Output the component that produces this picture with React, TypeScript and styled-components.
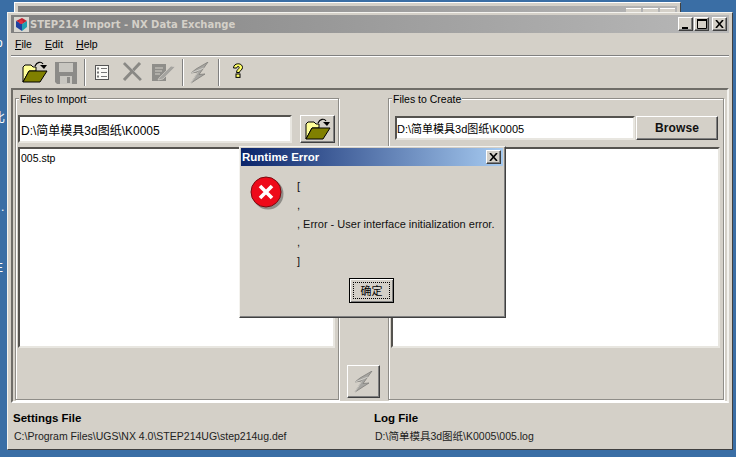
import React from "react";
import styled, { createGlobalStyle } from "styled-components";

const SANS = `"Liberation Sans", "Noto Sans CJK SC", sans-serif`;

const Global = createGlobalStyle`
  html, body { margin: 0; padding: 0; background: #3a6ea5; }
  * { box-sizing: border-box; }
`;

const Desktop = styled.div`
  position: relative;
  width: 736px;
  height: 457px;
  overflow: hidden;
  background: #3a6ea5;
  font: 11px ${SANS};
  color: #000;
`;

const DesktopMark = styled.span<{ $top: number; $left: number }>`
  position: absolute;
  top: ${(p) => p.$top}px;
  left: ${(p) => p.$left}px;
  color: #fff;
  font: 12px ${SANS};
`;

const BackWindow = styled.div`
  position: absolute;
  left: 14px;
  top: 2px;
  width: 667px;
  height: 12px;
  background: #d4d0c8;
  border-top: 1px solid #fff;
  border-left: 1px solid #fff;
  border-right: 1px solid #404040;
  padding: 3px 3px 0;
`;

const BackTitle = styled.div`
  height: 8px;
  background: linear-gradient(90deg, #808080, #b5b5b5);
  display: flex;
  justify-content: flex-end;
  gap: 2px;
  padding-right: 2px;
  padding-top: 2px;
`;

const BackButton = styled.span`
  width: 15px;
  height: 6px;
  background: #d4d0c8;
  border-top: 1px solid #fff;
`;

const MainWindow = styled.div`
  position: absolute;
  left: 7px;
  top: 12px;
  width: 726px;
  height: 438px;
  background: #d4d0c8;
  border: 1px solid;
  border-color: #f4f3ef #404040 #404040 #f4f3ef;
  padding: 2px 3px;
  display: flex;
  flex-direction: column;
`;

const TitleBar = styled.div<{ $active?: boolean }>`
  height: 18px;
  flex: none;
  display: flex;
  align-items: center;
  padding: ${(p) => (p.$active ? "0 2px 1px 1px" : "0 2px 0 3px")};
  background: ${(p) =>
    p.$active
      ? "linear-gradient(90deg, #0a246a, #a6caf0)"
      : "linear-gradient(90deg, #808080, #b8b8b8)"};
`;

const AppTitle = styled.span`
  margin-left: 1px;
  font: bold 10px "DejaVu Sans", sans-serif;
  color: #d4d0c8;
  flex: 1;
`;

const DialogTitle = styled.span`
  font: bold 11.5px ${SANS};
  color: #fff;
  flex: 1;
`;

const CaptionButtons = styled.div`
  display: flex;
`;

const CaptionButton = styled.span<{ $gap?: number }>`
  width: 15px;
  height: 14px;
  margin-left: ${(p) => p.$gap ?? 0}px;
  background: #d4d0c8;
  border: 1px solid;
  border-color: #fff #404040 #404040 #fff;
  box-shadow: inset -1px -1px 0 #808080;
  display: flex;
  align-items: center;
  justify-content: center;
`;

const MenuBar = styled.div`
  height: 22px;
  flex: none;
  display: flex;
  align-items: center;
  gap: 13px;
  padding: 0 0 0 4px;
  font-size: 10.5px;
`;

const MenuItem = styled.span`
  &::first-letter {
    text-decoration: underline;
  }
`;

const Rule = styled.div`
  height: 2px;
  flex: none;
  border-top: 1px solid #808080;
  border-bottom: 1px solid #fff;
`;

const Toolbar = styled.div`
  height: 31px;
  flex: none;
  display: flex;
  align-items: center;
  padding-left: 8px;
`;

const ToolSlot = styled.span<{ $lift?: number }>`
  width: 31px;
  height: 28px;
  padding-bottom: ${(p) => p.$lift ?? 0}px;
  display: flex;
  align-items: center;
  justify-content: center;
`;

const ToolSep = styled.span<{ $after?: number }>`
  width: 2px;
  height: 27px;
  margin: 0 ${(p) => p.$after ?? 0}px 0 3px;
  border-left: 1px solid #808080;
  border-right: 1px solid #fff;
`;

const Body = styled.div`
  height: 315px;
  flex: none;
  display: flex;
  padding: 8px 4px 1px 2px;
  border: 2px solid;
  border-color: #6f6d68 #f4f3ef #fff #6f6d68;
`;

const Group = styled.div<{ $width: number; $pad: number }>`
  position: relative;
  width: ${(p) => p.$width}px;
  height: 302px;
  flex: none;
  padding: 16px ${(p) => p.$pad}px 0;
  border: 1px solid #8f8d88;
  box-shadow: 1px 1px 0 #fff, inset 1px 1px 0 #fff;
`;

const GroupLegend = styled.span`
  position: absolute;
  top: -6px;
  left: 3px;
  padding: 0 1px;
  background: #d4d0c8;
  font-size: 10.5px;
  line-height: 12px;
`;

const InputRow = styled.div<{ $offset?: number; $gap: number }>`
  height: 28px;
  display: flex;
  align-items: flex-start;
  gap: ${(p) => p.$gap}px;
  padding: ${(p) => p.$offset ?? 0}px 0 0 ${(p) => (p.$offset ? p.$offset * 4 : 0)}px;
`;

const PathField = styled.div<{ $width: number; $height: number; $size: number }>`
  width: ${(p) => p.$width}px;
  height: ${(p) => p.$height}px;
  flex: none;
  background: #fff;
  border: 2px solid;
  border-color: #55534f #e8e6e0 #e8e6e0 #55534f;
  padding-left: ${(p) => (p.$size > 11 ? 1 : 0)}px;
  display: flex;
  align-items: center;
  font-size: ${(p) => p.$size}px;
  white-space: nowrap;
`;

const RaisedButton = styled.button<{ $width: number; $height: number }>`
  width: ${(p) => p.$width}px;
  height: ${(p) => p.$height}px;
  flex: none;
  padding: 0;
  background: #d4d0c8;
  border: 1px solid;
  border-color: #fff #404040 #404040 #fff;
  box-shadow: inset -1px -1px 0 #808080;
  display: flex;
  align-items: center;
  justify-content: center;
  font: bold 12px ${SANS};
  letter-spacing: 0.1px;
  color: #111;
`;

const FileList = styled.div<{ $width: number }>`
  width: ${(p) => p.$width}px;
  height: 201px;
  margin-top: 4px;
  background: #fff;
  border: 2px solid;
  border-color: #55534f #e8e6e0 #e8e6e0 #55534f;
  padding: 3px 1px;
  font-size: 10.5px;
  line-height: 13px;
`;

const MiddleColumn = styled.div`
  width: 49px;
  flex: none;
  display: flex;
  align-items: flex-end;
  justify-content: center;
  padding-bottom: 2px;
  height: 302px;
`;

const Footer = styled.div`
  flex: 1;
  display: grid;
  grid-template-columns: 361px 1fr;
  padding: 8px 0 0 2px;
`;

const FooterBlock = styled.div`
  display: flex;
  flex-direction: column;
  gap: 5px;
`;

const FooterLabel = styled.div`
  font: bold 11.5px ${SANS};
  line-height: 14px;
`;

const FooterPath = styled.div`
  font-size: 10.5px;
  line-height: 13px;
  padding-left: 1px;
  white-space: nowrap;
  color: #222;
`;

const Dialog = styled.div`
  position: absolute;
  left: 239px;
  top: 146px;
  width: 267px;
  height: 172px;
  background: #d4d0c8;
  border: 1px solid;
  border-color: #f4f3ef #404040 #404040 #f4f3ef;
  box-shadow: inset -1px -1px 0 #808080;
  padding: 1px 2px 2px 1px;
  display: flex;
  flex-direction: column;
`;

const DialogBody = styled.div`
  display: flex;
  padding: 10px 0 0 9px;
`;

const IconColumn = styled.div`
  width: 47px;
  flex: none;
`;

const MessageColumn = styled.div`
  flex: 1;
  padding-top: 1px;
`;

const MessageLine = styled.div`
  height: 18.8px;
  font-size: 11px;
  line-height: 18.8px;
  white-space: nowrap;
  color: #111;
`;

const OkRow = styled.div`
  margin-top: 7px;
  display: flex;
  justify-content: center;
  padding-right: 1px;
`;

const OkButton = styled.button`
  width: 45px;
  height: 25px;
  padding: 0;
  background: #d4d0c8;
  border: 1px solid #000;
  box-shadow: inset 1px 1px 0 #fff, inset -1px -1px 0 #808080;
  display: flex;
  align-items: center;
  justify-content: center;
  font: 11px ${SANS};
`;

const Focus = styled.span`
  width: 37px;
  height: 17px;
  border: 1px dotted #000;
  display: flex;
  align-items: center;
  justify-content: center;
`;

const Folder = () => (
  <svg width="26" height="24" viewBox="0 0 26 24">
    <path d="M1 22 V7 l2-2 h6 l2 2 h3 v4 H7 Z" fill="#ffff99" stroke="#000" strokeWidth="1" />
    <path d="M1 22 L7 11 H25 L18 22 Z" fill="#808000" stroke="#000" strokeWidth="1" />
    <path d="M13 6 C15 2 19 1 21 4" fill="none" stroke="#000" strokeWidth="1.2" />
    <path d="M18 5 H25 L22 9 Z" fill="#000" />
  </svg>
);

const Floppy = () => (
  <svg width="22" height="22" viewBox="0 0 22 22">
    <path d="M0 0 H22 V22 H2 L0 20 Z" fill="#8c8b88" />
    <rect x="4" y="1" width="14" height="9" fill="#c8c6c0" />
    <rect x="5" y="14" width="12" height="8" fill="#c8c6c0" />
    <rect x="12" y="15" width="3" height="6" fill="#8c8b88" />
  </svg>
);

const ListIcon = () => (
  <svg width="14" height="15" viewBox="0 0 14 15">
    <rect x="0.5" y="0.5" width="13" height="14" fill="#fbfaf6" stroke="#555" />
    <g fill="#777">
      <rect x="2" y="2.5" width="2" height="2" />
      <rect x="2" y="6.5" width="2" height="2" />
      <rect x="2" y="10.5" width="2" height="2" />
      <rect x="6" y="3" width="6" height="1" />
      <rect x="6" y="7" width="6" height="1" />
      <rect x="6" y="11" width="6" height="1" />
    </g>
  </svg>
);

const CrossIcon = () => (
  <svg width="21" height="20" viewBox="0 0 21 20">
    <path d="M2 1 L19 18 M18 1 L2 18" stroke="#8a8985" strokeWidth="3" fill="none" />
    <path d="M3 0 L20 17" stroke="#fff" strokeWidth="0.5" opacity="0.5" />
  </svg>
);

const EditIcon = () => (
  <svg width="23" height="17" viewBox="0 0 23 17">
    <path d="M0 0 H14 V17 H0 Z" fill="#8f8e8a" />
    <path d="M3 4 H11 M3 7 H10 M3 10 H8" stroke="#d4d0c8" strokeWidth="1.2" />
    <path d="M7 14 L19 2 L23 3 L11 15 L6 16 Z" fill="#a5a4a0" stroke="#d4d0c8" strokeWidth="0.7" />
  </svg>
);

const Bolt = () => (
  <svg width="19" height="22" viewBox="0 0 19 22">
    <path d="M18 0 L6 7 L1 11 L8 10 L1 21 L15 12 L9 12.5 Z" fill="#a6a5a1" stroke="#807f7b" strokeWidth="0.8" />
    <path d="M1 11 L14 6 M1 21 L8 10" stroke="#eeece6" strokeWidth="0.6" fill="none" />
  </svg>
);

const Question = () => (
  <svg width="12" height="15" viewBox="0 0 12 15">
    <path
      d="M1.5 5 C1.5 -0.5 10.5 -0.5 10.5 4.5 C10.5 7 7.5 7.5 7.5 9.5 H4.5 C4.5 6.5 7.2 6 7.2 4.5 C7.2 3 5 3 4.7 5 Z"
      fill="#ffff66"
      stroke="#000"
      strokeWidth="1"
    />
    <rect x="4" y="11" width="4" height="3.4" fill="#ffff66" stroke="#000" strokeWidth="1" />
  </svg>
);

const AppIcon = () => (
  <svg width="15" height="15" viewBox="0 0 15 15">
    <rect width="15" height="15" fill="#d8d6d0" />
    <path d="M2 4 L8 1 L13 4 L8 7 Z" fill="#c02030" />
    <path d="M2 4 L8 7 V14 L2 10 Z" fill="#2040a0" />
    <path d="M8 7 L13 4 V10 L8 14 Z" fill="#20a0b0" />
    <circle cx="7" cy="5" r="2" fill="#e03040" />
  </svg>
);

const Minimize = () => (
  <svg width="9" height="9" viewBox="0 0 9 9">
    <rect x="1" y="7" width="6" height="2" fill="#000" />
  </svg>
);

const Maximize = () => (
  <svg width="10" height="10" viewBox="0 0 10 10">
    <path d="M0.5 1.5 H9.5 V9.5 H0.5 Z" fill="none" stroke="#000" />
    <rect x="0" y="0" width="10" height="2" fill="#000" />
  </svg>
);

const Close = () => (
  <svg width="9" height="8" viewBox="0 0 9 8">
    <path d="M1 0 L8 8 M8 0 L1 8" stroke="#000" strokeWidth="1.6" fill="none" />
  </svg>
);

const ErrorIcon = () => (
  <svg width="34" height="34" viewBox="0 0 34 34">
    <circle cx="18" cy="18" r="15.5" fill="#8f8d88" />
    <circle cx="16" cy="16" r="15" fill="#ee0a1a" stroke="#7a0a10" strokeWidth="1" />
    <path d="M10 10 L22 22 M22 10 L10 22" stroke="#fff" strokeWidth="3.6" fill="none" />
  </svg>
);

const PATH_TEXT = "D:\\简单模具3d图纸\\K0005";

export default function App() {
  return (
    <Desktop>
      <Global />
      <DesktopMark $top={36} $left={-4}>o</DesktopMark>
      <DesktopMark $top={108} $left={-7}>比</DesktopMark>
      <DesktopMark $top={200} $left={1}>.</DesktopMark>
      <DesktopMark $top={261} $left={-5}>E</DesktopMark>
      <BackWindow>
        <BackTitle>
          <BackButton />
          <BackButton />
          <BackButton />
        </BackTitle>
      </BackWindow>
      <MainWindow>
        <TitleBar>
          <AppIcon />
          <AppTitle>STEP214 Import - NX Data Exchange</AppTitle>
          <CaptionButtons>
            <CaptionButton><Minimize /></CaptionButton>
            <CaptionButton $gap={1}><Maximize /></CaptionButton>
            <CaptionButton $gap={3}><Close /></CaptionButton>
          </CaptionButtons>
        </TitleBar>
        <MenuBar>
          <MenuItem>File</MenuItem>
          <MenuItem>Edit</MenuItem>
          <MenuItem>Help</MenuItem>
        </MenuBar>
        <Rule />
        <Toolbar>
          <ToolSlot $lift={2}><Folder /></ToolSlot>
          <ToolSlot><Floppy /></ToolSlot>
          <ToolSep />
          <ToolSlot $lift={1}><ListIcon /></ToolSlot>
          <ToolSlot $lift={1}><CrossIcon /></ToolSlot>
          <ToolSlot $lift={1}><EditIcon /></ToolSlot>
          <ToolSep />
          <ToolSlot><Bolt /></ToolSlot>
          <ToolSep $after={2} />
          <ToolSlot $lift={5}><Question /></ToolSlot>
        </Toolbar>
        <Body>
          <Group $width={324} $pad={2}>
            <GroupLegend>Files to Import</GroupLegend>
            <InputRow $gap={8}>
              <PathField $width={274} $height={28} $size={12}>{PATH_TEXT}</PathField>
              <RaisedButton $width={35} $height={28}><Folder /></RaisedButton>
            </InputRow>
            <FileList $width={317}>005.stp</FileList>
          </Group>
          <MiddleColumn>
            <RaisedButton $width={33} $height={33}><Bolt /></RaisedButton>
          </MiddleColumn>
          <Group $width={336} $pad={2}>
            <GroupLegend>Files to Create</GroupLegend>
            <InputRow $offset={1} $gap={1}>
              <PathField $width={240} $height={24} $size={11}>{PATH_TEXT}</PathField>
              <RaisedButton $width={82} $height={24}>Browse</RaisedButton>
            </InputRow>
            <FileList $width={329} />
          </Group>
        </Body>
        <Footer>
          <FooterBlock>
            <FooterLabel>Settings File</FooterLabel>
            <FooterPath>C:\Program Files\UGS\NX 4.0\STEP214UG\step214ug.def</FooterPath>
          </FooterBlock>
          <FooterBlock>
            <FooterLabel>Log File</FooterLabel>
            <FooterPath>D:\简单模具3d图纸\K0005\005.log</FooterPath>
          </FooterBlock>
        </Footer>
      </MainWindow>
      <Dialog>
        <TitleBar $active>
          <DialogTitle>Runtime Error</DialogTitle>
          <CaptionButton><Close /></CaptionButton>
        </TitleBar>
        <DialogBody>
          <IconColumn><ErrorIcon /></IconColumn>
          <MessageColumn>
            <MessageLine>[</MessageLine>
            <MessageLine>,</MessageLine>
            <MessageLine>, Error - User interface initialization error.</MessageLine>
            <MessageLine>,</MessageLine>
            <MessageLine>]</MessageLine>
          </MessageColumn>
        </DialogBody>
        <OkRow>
          <OkButton><Focus>确定</Focus></OkButton>
        </OkRow>
      </Dialog>
    </Desktop>
  );
}
